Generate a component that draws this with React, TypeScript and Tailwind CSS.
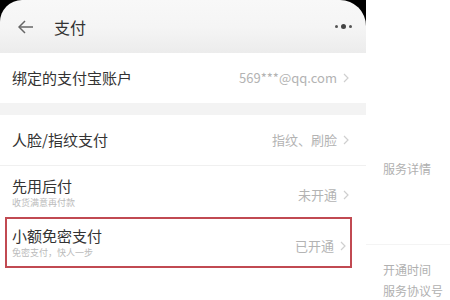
import React from "react";

const Chevron = () => (
  <svg width="6" height="10" viewBox="0 0 6 10" className="ml-[6px]">
    <polyline points="1,1 5,5 1,9" fill="none" stroke="#cfcfcf" strokeWidth="1.2" />
  </svg>
);

export default function App() {
  return (
    <div
      className="flex w-[450px] h-[300px] bg-white overflow-hidden"
      style={{ fontFamily: '"Noto Sans CJK SC", "Noto Sans", sans-serif' }}
    >
      <div className="w-[366px] flex flex-col shrink-0">
        <div className="bg-black">
          <div className="h-[53px] rounded-tl-[22px] rounded-tr-[26px] bg-gradient-to-b from-[#f8f8f8] via-[#f5f5f5] to-[#ececec] flex items-center pl-[18px] pr-[14px]">
            <svg width="16" height="14" viewBox="0 0 16 14">
              <polyline points="7,1 1,7 7,13" fill="none" stroke="#666" strokeWidth="1.5" />
              <line x1="1" y1="7" x2="15" y2="7" stroke="#666" strokeWidth="1.5" />
            </svg>
            <span className="ml-[20px] text-[16px] text-[#333] leading-none">支付</span>
            <div className="ml-auto flex items-center gap-[3px]">
              <span className="w-[3px] h-[3px] rounded-full bg-[#555]" />
              <span className="w-[5px] h-[5px] rounded-full bg-[#444]" />
              <span className="w-[3px] h-[3px] rounded-full bg-[#555]" />
            </div>
          </div>
        </div>
        <div className="h-[50px] flex items-center justify-between pl-[12px] pr-[17px]">
          <span className="text-[15px] text-[#333]">绑定的支付宝账户</span>
          <div className="flex items-center text-[13px] text-[#b3b3b3]">
            569***@qq.com
            <Chevron />
          </div>
        </div>
        <div className="h-[12px] bg-[#f3f3f3]" />
        <div className="h-[51px] flex items-center justify-between pl-[12px] pr-[17px] border-b border-[#f0f0f0]">
          <span className="text-[15px] text-[#333]">人脸/指纹支付</span>
          <div className="flex items-center text-[13px] text-[#b3b3b3]">
            指纹、刷脸
            <Chevron />
          </div>
        </div>
        <div className="h-[51px] flex items-center justify-between pl-[12px] pr-[17px]">
          <div className="flex flex-col pt-[2px]">
            <span className="text-[15px] text-[#333] leading-[20px]">先用后付</span>
            <span className="text-[9px] text-[#bbbbbb] leading-[14px]">收货满意再付款</span>
          </div>
          <div className="flex items-center text-[13px] text-[#b3b3b3] pt-[6px]">
            未开通
            <Chevron />
          </div>
        </div>
        <div className="ml-[5px] w-[347px] h-[51px] border-2 border-[#c14a52] flex items-center justify-between pl-[5px] pr-[4px]">
          <div className="flex flex-col pt-[1px]">
            <span className="text-[15px] text-[#333] leading-[20px]">小额免密支付</span>
            <span className="text-[9px] text-[#bbbbbb] leading-[14px]">免密支付，快人一步</span>
          </div>
          <div className="flex items-center text-[13px] text-[#b3b3b3] pt-[6px]">
            已开通
            <Chevron />
          </div>
        </div>
      </div>
      <div className="flex-1 flex flex-col pl-[17px]">
        <div className="h-[163px]" />
        <span className="text-[12px] text-[#b0b0b0] leading-[18px]">服务详情</span>
        <div className="h-[68px] border-b border-[#f4f4f4] -ml-[17px]" />
        <div className="h-[16px]" />
        <span className="text-[12px] text-[#b0b0b0] leading-[18px]">开通时间</span>
        <span className="text-[12px] text-[#b0b0b0] leading-[18px] mt-[3px]">服务协议号</span>
      </div>
    </div>
  );
}
